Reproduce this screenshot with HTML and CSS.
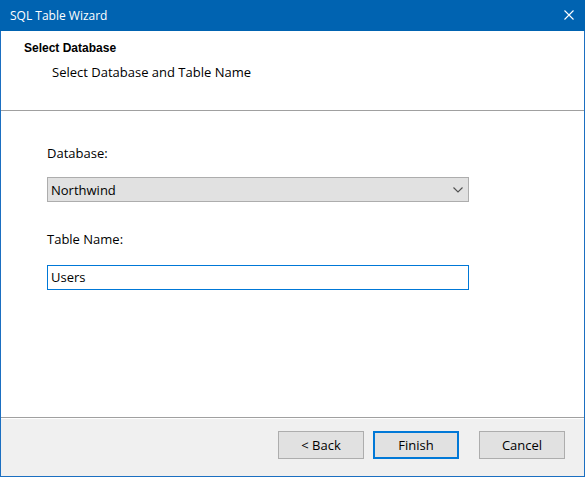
FILE: index.html
```html
<!DOCTYPE html>
<html>
<head>
<meta charset="utf-8">
<link rel="stylesheet" href="styles.css">
</head>
<body>
<div class="window">
  <div class="titlebar">
    <span class="title">SQL Table Wizard</span>
    <svg class="close" width="10" height="10" viewBox="0 0 10 10"><path d="M0.5 0.5L9.5 9.5M9.5 0.5L0.5 9.5" stroke="#ffffff" stroke-width="1.1" fill="none"/></svg>
  </div>
  <div class="client">
    <div class="header">
      <div class="h-title">Select Database</div>
      <div class="h-sub">Select Database and Table Name</div>
    </div>
    <div class="body">
      <div class="label">Database:</div>
      <div class="select">
        <span class="value">Northwind</span>
        <svg class="chev" width="10" height="6" viewBox="0 0 10 6"><path d="M0.5 0.5L5 5L9.5 0.5" stroke="#505050" stroke-width="1.1" fill="none"/></svg>
      </div>
      <div class="label label-2">Table Name:</div>
      <div class="input">Users</div>
    </div>
    <div class="footer">
      <button class="btn">&lt; Back</button>
      <button class="btn btn-default">Finish</button>
      <button class="btn btn-cancel">Cancel</button>
    </div>
  </div>
</div>
</body>
</html>
```
FILE: styles.css
```css
* { box-sizing: border-box; }
html, body { margin: 0; padding: 0; background: #ffffff; }
body { font-family: "Open Sans", "Liberation Sans", sans-serif; font-size: 13px; color: #000; }

.window { width: 585px; height: 477px; display: flex; flex-direction: column; }

.titlebar {
  height: 31px; background: #0063b1; color: #fff;
  display: flex; align-items: center; justify-content: space-between;
  padding: 0 11px 0 10px;
}
.title { font-size: 12px; line-height: 16px; }
.close { display: block; margin-top: -1px; }

.client {
  flex: 1; display: flex; flex-direction: column;
  border-left: 1px solid #1b6fc1; border-right: 1px solid #1b6fc1; border-bottom: 1px solid #1b6fc1;
}

.header { height: 80px; border-bottom: 1px solid #a0a0a0; padding: 9px 0 0 23px; background: #fff; }
.h-title { font-family: "Liberation Sans", Arial, sans-serif; font-weight: bold; font-size: 12px; line-height: 16px; }
.h-sub { margin: 7px 0 0 28px; line-height: 18px; }

.body { height: 307px; border-bottom: 1px solid #a0a0a0; padding: 33px 0 0 46px; background: #fff; }
.label { line-height: 18px; }
.label-2 { margin-top: 28px; }
.select {
  margin-top: 15px; width: 422px; height: 25px;
  background: #e1e1e1; border: 1px solid #adadad;
  display: flex; align-items: center; justify-content: space-between;
  padding: 0 3px 0 3px; line-height: 18px;
}
.chev { display: block; margin-right: 2px; margin-top: 1px; }
.input {
  margin-top: 17px; width: 422px; height: 25px;
  border: 1px solid #0078d7; background: #fff;
  padding: 2px 3px; line-height: 19px;
}

.footer {
  flex: 1; border-top: 1px solid #ffffff; background: #f0f0f0;
  display: flex; justify-content: flex-end; align-items: flex-start;
  padding: 12px 19px 0 0;
}
.btn {
  width: 86px; height: 28px; margin: 0; padding: 0;
  background: #e1e1e1; border: 1px solid #adadad;
  font-family: "Open Sans", "Liberation Sans", sans-serif; font-size: 13px; color: #000;
  line-height: 18px;
}
.btn-default { border: 2px solid #0078d7; margin-left: 9px; }
.btn-cancel { margin-left: 20px; }
```
